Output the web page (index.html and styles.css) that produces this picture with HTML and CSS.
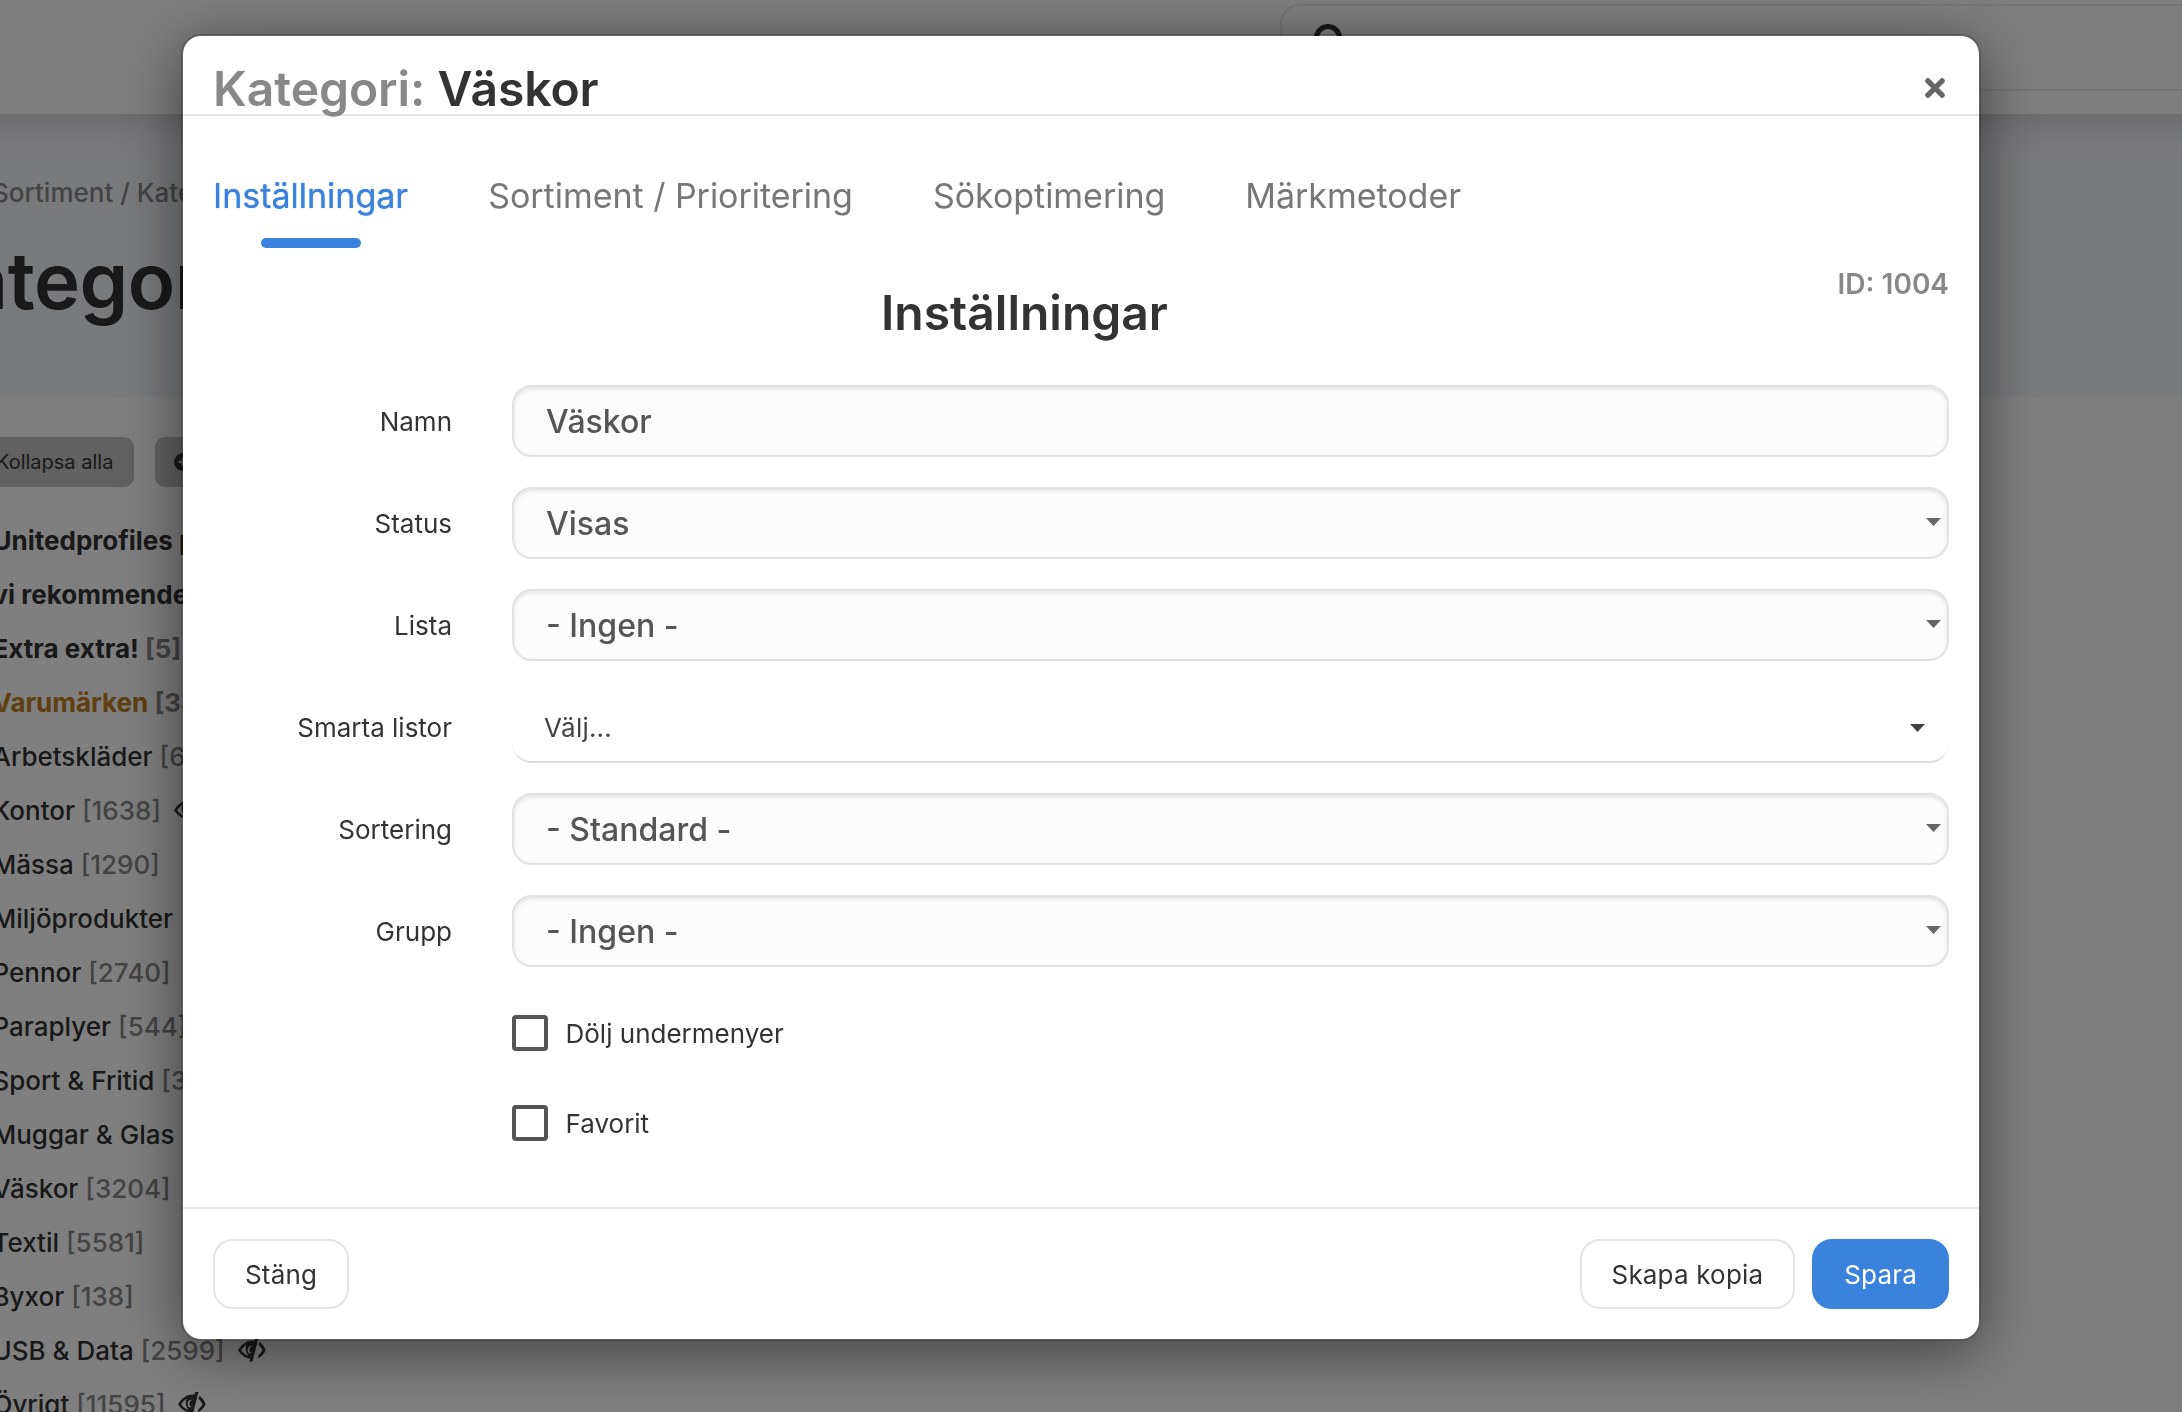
FILE: index.html
```html
<!DOCTYPE html>
<html lang="sv">
<head>
<meta charset="utf-8">
<title>Kategori: Väskor</title>
<link rel="stylesheet" href="styles.css">
</head>
<body>
<svg class="sprite" aria-hidden="true">
  <symbol id="eye-off" viewBox="0 0 28 24">
    <path fill="currentColor" fill-rule="evenodd" d="M0 12.300C4 5 10 2 16.500 2.500L17.300 0h3.200L14.500 23.500h-3L12.200 20.800C7 20 3 17 0 12.300zM3.300 12.300C5 15 7.500 17 10.500 18 7.500 14.500 7 10 8.500 6.500 6.500 8 5 9.500 3.300 12.300zM14 7.800C10 7.800 9 11.500 10.200 14.200 11 15.800 13 15.800 13.800 14.500 12 14.800 11.200 13 11.500 11.200 11.800 9.600 12.800 8.800 14 7.800z"/>
    <path fill="currentColor" d="M21.500 3.800C24.500 6 26.500 9 27.700 12.300 26 16 23.500 18.800 19.800 20.300L20.600 17C22.500 15.800 23.700 14.200 24.500 12.300 23.600 10.200 22.300 8.400 20.500 7z"/>
  </symbol>
</svg>

<div class="page">
  <header class="topbar">
    <div class="search">
      <svg class="search-icon" viewBox="0 0 32 32"><circle cx="14" cy="14" r="11.500" fill="none" stroke="currentColor" stroke-width="5"/><path d="m22 22 9 9" stroke="currentColor" stroke-width="5"/></svg>
    </div>
  </header>
  <section class="banner">
    <div class="crumbs">Sortiment / Kategorier</div>
    <h1 class="page-title">Kategorier</h1>
  </section>
  <main class="content">
    <div class="tools">
      <span class="tool tool-collapse">Kollapsa alla</span>
      <span class="tool tool-add"><svg class="add-icon" viewBox="0 0 18 18"><circle cx="9" cy="9" r="9" fill="currentColor"/><path d="M9 4.500v9M4.500 9h9" stroke="#c3c3c3" stroke-width="2.400"/></svg></span>
    </div>
    <ul class="tree">
      <li class="strong">Unitedprofiles produkter</li>
      <li class="strong">vi rekommenderar</li>
      <li class="strong">Extra extra! <span class="count">[5]</span></li>
      <li class="strong brand">Varumärken <span class="count">[34]</span></li>
      <li>Arbetskläder <span class="count">[643]</span></li>
      <li>Kontor <span class="count">[1638]</span><svg class="eye"><use href="#eye-off"/></svg></li>
      <li>Mässa <span class="count">[1290]</span></li>
      <li>Miljöprodukter</li>
      <li>Pennor <span class="count">[2740]</span></li>
      <li>Paraplyer <span class="count">[544]</span></li>
      <li>Sport &amp; Fritid <span class="count">[3120]</span></li>
      <li>Muggar &amp; Glas</li>
      <li>Väskor <span class="count">[3204]</span></li>
      <li>Textil <span class="count">[5581]</span></li>
      <li>Byxor <span class="count">[138]</span></li>
      <li>USB &amp; Data <span class="count">[2599]</span><svg class="eye"><use href="#eye-off"/></svg></li>
      <li>Övrigt <span class="count">[11595]</span><svg class="eye"><use href="#eye-off"/></svg></li>
    </ul>
  </main>
</div>

<div class="backdrop">
  <div class="modal" role="dialog">
    <header class="modal-header">
      <h2 class="modal-title"><span class="muted">Kategori:</span> Väskor</h2>
      <svg class="close" viewBox="0 0 20 20"><path d="m2.900 2.900 14.200 14.200M17.100 2.900 2.900 17.100" stroke="currentColor" stroke-width="5.400" stroke-linecap="round"/></svg>
    </header>
    <div class="modal-body">
      <nav class="tabs">
        <a class="tab active"><span>Inställningar</span></a>
        <a class="tab"><span>Sortiment / Prioritering</span></a>
        <a class="tab"><span>Sökoptimering</span></a>
        <a class="tab"><span>Märkmetoder</span></a>
      </nav>
      <div class="section-head">
        <h3 class="section-title"><span>Inställningar</span></h3>
        <span class="item-id">ID: 1004</span>
      </div>
      <form class="form">
        <div class="row"><label class="label">Namn</label><div class="field">Väskor</div></div>
        <div class="row"><label class="label">Status</label><div class="field">Visas<i class="caret"></i></div></div>
        <div class="row"><label class="label">Lista</label><div class="field">- Ingen -<i class="caret"></i></div></div>
        <div class="row"><label class="label">Smarta listor</label><div class="field plain">Välj...<i class="caret"></i></div></div>
        <div class="row"><label class="label">Sortering</label><div class="field">- Standard -<i class="caret"></i></div></div>
        <div class="row"><label class="label">Grupp</label><div class="field">- Ingen -<i class="caret"></i></div></div>
        <div class="checks">
          <div class="check"><i class="box"></i><span>Dölj undermenyer</span></div>
          <div class="check"><i class="box"></i><span>Favorit</span></div>
        </div>
      </form>
    </div>
    <footer class="modal-footer">
      <button class="btn" type="button">Stäng</button>
      <button class="btn push" type="button">Skapa kopia</button>
      <button class="btn primary" type="button">Spara</button>
    </footer>
  </div>
</div>
</body>
</html>
```
FILE: styles.css
```css
* { box-sizing: border-box; }
html, body { height: 100%; }
body {
  margin: 0;
  overflow: hidden;
  background: #fff;
  color: #333;
  font-family: Inter, "Liberation Sans", sans-serif;
  font-size: 26px;
}
h1, h2, h3, ul { margin: 0; padding: 0; }
.sprite { display: none; }

.page { height: 1412px; overflow: hidden; white-space: nowrap; }
.topbar {
  display: flex;
  height: 114px;
  margin: 0 -60px;
  padding: 4px 0 0 1340px;
  background: #fff;
  position: relative;
  box-shadow: 0 4px 40px rgba(0, 0, 0, .18);
}
.search {
  flex: 1;
  height: 87px;
  padding: 18px 32px;
  border: 2px solid #ececec;
  border-right: 0;
  border-radius: 20px 0 0 20px;
}
.search-icon { display: block; width: 32px; height: 32px; }
.banner { height: 283px; background: #f3f4f7; padding-top: 59px; }
.crumbs { margin-left: -8px; line-height: 40px; color: #888; font-weight: 500; }
.page-title {
  margin: 18px 0 0 -91px;
  font-size: 78px;
  line-height: 100px;
  font-weight: 600;
  letter-spacing: -.5px;
}
.content { padding-top: 40px; }
.tools { display: flex; gap: 21px; margin-left: -30px; }
.tool {
  display: flex;
  align-items: center;
  height: 50px;
  border-radius: 10px;
  background: #c3c3c3;
  font-size: 20px;
}
.tool-collapse { width: 164px; padding-left: 26px; }
.tool-add { width: 200px; padding-left: 19px; }
.add-icon { width: 18px; height: 18px; }
.tree { list-style: none; margin: 26px 0 0 -7.5px; }
.tree li { display: flex; align-items: center; height: 54px; font-weight: 500; white-space: pre; }
.tree .strong { font-weight: 700; }
.tree .brand { color: #be7e22; }
.count { color: #888; }
.eye { width: 28px; height: 24px; margin-left: 13px; }

.backdrop {
  position: fixed;
  inset: 0;
  padding: 34px 201px 0 181px;
  background: rgba(0, 0, 0, .5);
}
.modal {
  display: flex;
  flex-direction: column;
  width: 1800px;
  height: 1307px;
  border: 2px solid rgba(0, 0, 0, .2);
  border-radius: 20px;
  background: #fff;
  background-clip: padding-box;
  box-shadow: 0 10px 60px rgba(0, 0, 0, .5);
}
.modal-header {
  display: flex;
  justify-content: space-between;
  height: 80px;
  padding: 23px 34px 0 30px;
  border-bottom: 2px solid #e5e5e5;
}
.modal-title { font-size: 48px; line-height: 60px; font-weight: 600; letter-spacing: -.05px; }
.muted { color: #888; }
.close { width: 20px; height: 20px; margin-top: 19px; color: #666; }
.modal-body { flex: 1; padding: 50px 30px 0; }
.tabs { display: flex; gap: 80px; height: 82px; }
.tab {
  display: flex;
  flex-direction: column;
  align-items: center;
  font-size: 34px;
  line-height: 60px;
  letter-spacing: -.03px;
  color: #777;
}
.tab.active { color: #3b82dc; letter-spacing: 0; text-shadow: 0 0 1px #3b82dc; }
.tab.active::after {
  content: "";
  width: 100px;
  height: 10px;
  margin-top: 12px;
  border-radius: 5px;
  background: #3b82dc;
}
.section-head { display: flex; height: 137px; padding-top: 20px; }
.section-title {
  flex: 1;
  padding: 15px 0 0 157px;
  text-align: center;
  font-size: 48px;
  line-height: 60px;
  font-weight: 600;
}
.item-id { width: 270px; text-align: right; font-size: 28px; line-height: 32px; font-weight: 600; color: #888; }
.form { display: flex; flex-direction: column; gap: 30px; }
.row { display: flex; align-items: center; gap: 60px; height: 72px; }
.label { width: 239px; text-align: right; }
.field {
  display: flex;
  align-items: center;
  justify-content: space-between;
  flex: 1;
  height: 72px;
  padding: 0 6px 0 32px;
  border: 2px solid #e2e2e2;
  border-radius: 20px;
  background: #fcfcfc;
  box-shadow: inset 0 2px 4px rgba(0, 0, 0, .1);
  color: #555;
  font-size: 32px;
  font-weight: 500;
}
.caret { width: 15px; height: 8px; margin-top: -2px; background: #666; clip-path: polygon(0 0, 100% 0, 50% 100%); }
.plain {
  padding: 2px 24px 0 32px;
  border-color: transparent transparent #ddd;
  border-width: 0 0 2px;
  background: #fff;
  box-shadow: none;
  color: #444;
  font-size: 26px;
  font-weight: 400;
  letter-spacing: .2px;
}
.plain .caret { background: #444; margin-top: 2px; }
.checks { display: flex; flex-direction: column; gap: 54px; padding: 18px 0 0 299px; }
.check { display: flex; align-items: center; gap: 17.5px; height: 36px; }
.box { width: 36px; height: 36px; border: 4px solid #555; border-radius: 4px; }
.modal-footer {
  display: flex;
  gap: 17px;
  height: 132px;
  padding: 30px 30px 0;
  border-top: 2px solid #e5e5e5;
}
.btn {
  height: 70px;
  padding: 0 30px;
  border: 2px solid #e5e5e5;
  border-radius: 20px;
  background: #fff;
  color: #333;
  font: 400 26px Inter, "Liberation Sans", sans-serif;
  letter-spacing: .18px;
}
.push { margin-left: auto; }
.primary { background: #3b82dc; border-color: #3b82dc; color: #fff; }
```
